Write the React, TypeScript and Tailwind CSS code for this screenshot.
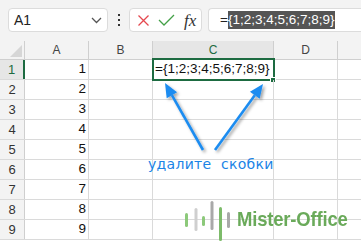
import React from "react";

const rowsData = [1, 2, 3, 4, 5, 6, 7, 8, 9];

function Cell({ w, children, className = "" }: { w: string; children?: React.ReactNode; className?: string }) {
  return (
    <div className={`${w} shrink-0 h-full border-r border-[#dadada] flex items-center ${className}`}>{children}</div>
  );
}

export default function App() {
  return (
    <div
      className="relative w-[361px] h-[241px] overflow-hidden bg-white"
      style={{ fontFamily: "'Liberation Sans', Arial, sans-serif" }}
    >
      {/* Toolbar */}
      <div className="h-[41px] bg-[#f3f3f3] flex items-start pt-[8px] pl-[8px]">
        <div className="w-[100px] h-[24px] bg-white border border-[#dcdcdc] rounded-[4px] flex items-center justify-between pl-[5px] pr-[5px]">
          <span className="text-[14px] text-[#222]">A1</span>
          <svg width="11" height="7" viewBox="0 0 11 7">
            <path d="M1 1 L5.5 5.5 L10 1" fill="none" stroke="#555" strokeWidth="1.3" />
          </svg>
        </div>
        <div className="w-[21px] h-[24px] flex flex-col items-center justify-center gap-[3px]">
          <div className="w-[2px] h-[2px] bg-[#333]" />
          <div className="w-[2px] h-[2px] bg-[#333]" />
          <div className="w-[2px] h-[2px] bg-[#333]" />
        </div>
        <div className="w-[73px] h-[24px] bg-white border border-[#dcdcdc] rounded-[4px] flex items-center pl-[7px]">
          <svg width="13" height="13" viewBox="0 0 13 13">
            <path d="M1.5 1.5 L11.5 11.5 M11.5 1.5 L1.5 11.5" stroke="#e5484f" strokeWidth="1.3" fill="none" />
          </svg>
          <svg width="17" height="12" viewBox="0 0 17 12" className="ml-[8px]">
            <path d="M1 6 L6 11 L16 1" stroke="#43a047" strokeWidth="1.3" fill="none" />
          </svg>
          <span
            className="ml-[9px] text-[17px] italic text-[#333] leading-none"
            style={{ fontFamily: "'Liberation Serif', 'Times New Roman', serif" }}
          >
            fx
          </span>
        </div>
        <div className="ml-[6px] flex-1 h-[24px] bg-white border border-[#dcdcdc] border-r-0 rounded-l-[4px] flex items-center pl-[11px] text-[13.5px] text-[#222]">
          <span>=</span>
          <span className="bg-[#555555] text-white h-[18px] flex items-center">{"{1;2;3;4;5;6;7;8;9}"}</span>
        </div>
      </div>

      {/* Grid */}
      <div className="flex flex-col">
        {/* Header row */}
        <div className="h-[19px] flex border-b border-[#cfcfcf] bg-[#f3f3f3] text-[12px] text-[#444]">
          <div className="w-[25px] shrink-0 h-full border-r border-[#cfcfcf] relative">
            <svg className="absolute right-[2px] bottom-[2px]" width="12" height="12" viewBox="0 0 12 12">
              <path d="M12 0 L12 12 L0 12 Z" fill="#d6d6d6" />
            </svg>
          </div>
          <div className="w-[64px] shrink-0 h-full border-r border-[#cfcfcf] flex items-center justify-center">A</div>
          <div className="w-[64px] shrink-0 h-full border-r border-[#cfcfcf] flex items-center justify-center">B</div>
          <div className="w-[121px] shrink-0 h-full border-r border-[#cfcfcf] flex items-center justify-center bg-[#e6e6e6] text-[#1d6b41]">C</div>
          <div className="w-[64px] shrink-0 h-full border-r border-[#cfcfcf] flex items-center justify-center">D</div>
          <div className="flex-1 h-full" />
        </div>

        {rowsData.map((n) => (
          <div key={n} className="h-[20px] flex border-b border-[#dadada] text-[13.5px] text-[#111]">
            <div
              className={`w-[25px] shrink-0 h-full flex items-center justify-center text-[13px] ${
                n === 1
                  ? "bg-[#e6e6e6] text-[#1d6b41] border-r-2 border-[#1d6b41]"
                  : "bg-[#f3f3f3] text-[#333] border-r border-[#cfcfcf]"
              }`}
            >
              {n}
            </div>
            <Cell w="w-[64px]" className="justify-end pr-[2px]">{n}</Cell>
            <Cell w="w-[64px]" />
            <Cell w="w-[121px]" className="relative pl-[2px]">
              {n === 1 && (
                <>
                  <span>{"={1;2;3;4;5;6;7;8;9}"}</span>
                  <div className="absolute left-[-1px] top-[-2px] w-[123px] h-[23px] border-2 border-[#1d6b41]" />
                  <div className="absolute left-[117px] top-[17px] w-[6px] h-[6px] bg-[#1d6b41] border border-white" />
                </>
              )}
            </Cell>
            <Cell w="w-[64px]" />
            <div className="flex-1 h-full" />
          </div>
        ))}
      </div>

      {/* Arrows overlay */}
      <svg className="absolute left-0 top-0 pointer-events-none" width="361" height="241" viewBox="0 0 361 241">
        <defs>
          <filter id="sh" x="-20%" y="-20%" width="140%" height="140%">
            <feDropShadow dx="2" dy="2" stdDeviation="1.5" floodColor="#000" floodOpacity="0.35" />
          </filter>
        </defs>
        <g filter="url(#sh)" fill="#1c8cf0" stroke="#1c8cf0">
          <line x1="203" y1="150" x2="171.9" y2="95.2" strokeWidth="2.6" />
          <polygon points="165,83 177.1,92.2 166.7,98.2" stroke="none" />
          <line x1="215" y1="150" x2="254.8" y2="95.3" strokeWidth="2.6" />
          <polygon points="263,84 259.7,98.8 249.9,91.8" stroke="none" />
        </g>
      </svg>

      {/* Label */}
      <div
        className="absolute left-[148px] top-[155px] text-[14px] leading-[18px] text-[#1a84e6] tracking-[0.3px] whitespace-pre"
        style={{ fontFamily: "'DejaVu Sans', Verdana, sans-serif" }}
      >
        {"удалите  скобки"}
      </div>

      {/* Logo */}
      <div className="absolute left-[182px] top-[200px] flex items-start whitespace-nowrap">
        <svg width="52" height="41" viewBox="0 0 52 41" className="shrink-0">
          <rect x="3" y="13" width="3" height="14" rx="1.5" fill="#8cc97a" />
          <rect x="12.5" y="8" width="3" height="23" rx="1.5" fill="#cfcfcf" />
          <rect x="20" y="16" width="3" height="10" rx="1.5" fill="#8cc97a" />
          <rect x="28.5" y="1" width="3" height="29" rx="1.5" fill="#a9a9a9" />
          <rect x="37" y="7" width="3" height="34" rx="1.5" fill="#7dbb6a" />
          <rect x="45" y="12" width="3" height="16" rx="1.5" fill="#a9a9a9" />
        </svg>
        <span className="ml-[3px] mt-[8px] text-[21px] font-bold text-[#6aaa5a] leading-none scale-x-[0.88] origin-left tracking-[-0.2px] whitespace-nowrap">
          Mister-Office
        </span>
      </div>
    </div>
  );
}
